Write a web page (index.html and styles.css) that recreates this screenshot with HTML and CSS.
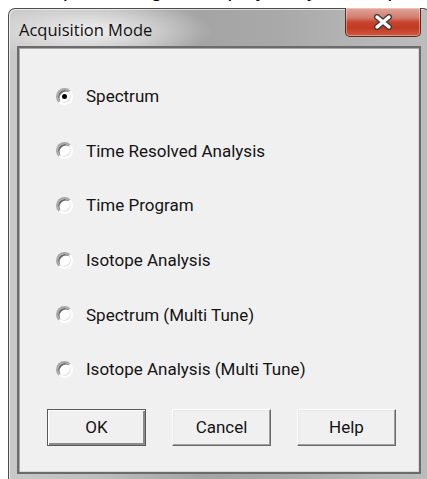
FILE: index.html
```html
<!DOCTYPE html>
<html lang="en">
<head>
<meta charset="utf-8">
<title>Acquisition Mode</title>
<link rel="stylesheet" href="styles.css">
</head>
<body>
  <div class="page-line">
    <p>of a capture image is displayed by the acquisition mode dialog.</p>
  </div>

  <div class="window">
    <div class="titlebar">
      <span class="title">Acquisition Mode</span>
      <button class="close" type="button" aria-label="Close">
        <svg width="20" height="16" viewBox="0 0 20 16">
          <path d="M4 3 L16 13 M16 3 L4 13" stroke="#3b3b3b" stroke-width="6" stroke-linecap="round"/>
          <path d="M4 3 L16 13 M16 3 L4 13" stroke="#ffffff" stroke-width="3.4" stroke-linecap="round"/>
        </svg>
      </button>
    </div>

    <div class="client">
      <div class="options">
        <label class="option"><span class="radio checked"><span class="dot"></span></span><span class="label">Spectrum</span></label>
        <label class="option"><span class="radio"></span><span class="label">Time Resolved Analysis</span></label>
        <label class="option"><span class="radio"></span><span class="label">Time Program</span></label>
        <label class="option"><span class="radio"></span><span class="label">Isotope Analysis</span></label>
        <label class="option"><span class="radio"></span><span class="label">Spectrum (Multi Tune)</span></label>
        <label class="option"><span class="radio"></span><span class="label">Isotope Analysis (Multi Tune)</span></label>
      </div>

      <div class="buttons">
        <button class="btn default" type="button">OK</button>
        <button class="btn" type="button">Cancel</button>
        <button class="btn" type="button">Help</button>
      </div>
    </div>
  </div>
</body>
</html>
```

FILE: styles.css
```css
html, body {
  margin: 0;
  padding: 0;
  background: #ffffff;
  overflow: hidden;
  width: 427px;
  height: 479px;
}

/* bottom of the document line that sits above the dialog */
.page-line {
  height: 8px;
  overflow: hidden;
}
.page-line p {
  margin: -20px 0 0 0;
  font-family: "Liberation Sans", Arial, sans-serif;
  font-size: 21px;
  line-height: 20px;
  color: #000;
  white-space: nowrap;
}

/* window frame */
.window {
  margin-left: 8px;
  width: 404px;
  padding: 0 8px 8px 8px;
  border: 1px solid #4d4d4d;
  border-bottom: none;
  border-radius: 7px 7px 0 0;
  background:
    radial-gradient(ellipse 120px 30px at 85px 22px, rgba(255,255,255,0.75), rgba(255,255,255,0) 100%),
    linear-gradient(to right, #c8c8c8 0%, #bfbfbf 20%, #a4a4a4 45%, #a9a9a9 65%, #b6b6b6 85%, #bcbcbc 100%);
  box-shadow: inset 1px 1px 0 rgba(255,255,255,0.6);
}

.titlebar {
  height: 37px;
  display: flex;
  align-items: flex-start;
  justify-content: space-between;
}

.title {
  margin: 11px 0 0 2px;
  font-family: "Open Sans", "Noto Sans", sans-serif;
  font-size: 16.5px;
  line-height: 20px;
  color: #111;
}

.close {
  width: 76px;
  height: 29px;
  margin: -1px 0 0 0;
  padding: 0;
  border: 1px solid #5e2a22;
  border-top: none;
  border-radius: 0 0 5px 5px;
  background: linear-gradient(to bottom, #e0a79b 0%, #d27c6d 35%, #c8442f 50%, #c23a24 70%, #cf5a3f 100%);
  box-shadow: inset 0 0 0 1px rgba(255,255,255,0.35);
  display: flex;
  align-items: center;
  justify-content: center;
}

/* dialog client area */
.client {
  height: 424px;
  border: 2px solid #6b6b6b;
  box-shadow: inset 1px 1px 0 #a8a8a8, inset -1px -1px 0 #d8d8d8;
  background: #f0f0f0;
  display: flex;
  flex-direction: column;
}

.options {
  display: flex;
  flex-direction: column;
  padding: 21px 0 0 37px;
}

.option {
  height: 54.6px;
  display: flex;
  align-items: center;
  gap: 13px;
}

.label,
.btn {
  font-family: Roboto, "Liberation Sans", sans-serif;
  font-size: 17px;
  color: #141414;
}

.radio {
  width: 17px;
  height: 17px;
  box-sizing: border-box;
  border-radius: 50%;
  border: 2px solid;
  border-color: #a8a8a8 #ffffff #ffffff #a8a8a8;
  background: #ffffff;
  box-shadow: inset 1.5px 1.5px 0 #6a6a6a, inset -1px -1px 0 #e2e2e2;
  display: grid;
  place-items: center;
  flex: none;
}

.dot {
  width: 5px;
  height: 5px;
  border-radius: 50%;
  background: #000;
}

.buttons {
  display: flex;
  gap: 26px;
  padding: 12px 0 0 28px;
}

.btn {
  width: 99px;
  height: 37px;
  padding: 0;
  background: #f0f0f0;
  border: 1px solid;
  border-color: #ffffff #6a6a6a #6a6a6a #ffffff;
  box-shadow: inset -1px -1px 0 #a0a0a0, inset 1px 1px 0 #e6e6e6;
}

.btn.default {
  border: 1px solid #5a5a5a;
  box-shadow: inset 1px 1px 0 #ffffff, inset -2px -2px 0 #8a8a8a;
}
```
